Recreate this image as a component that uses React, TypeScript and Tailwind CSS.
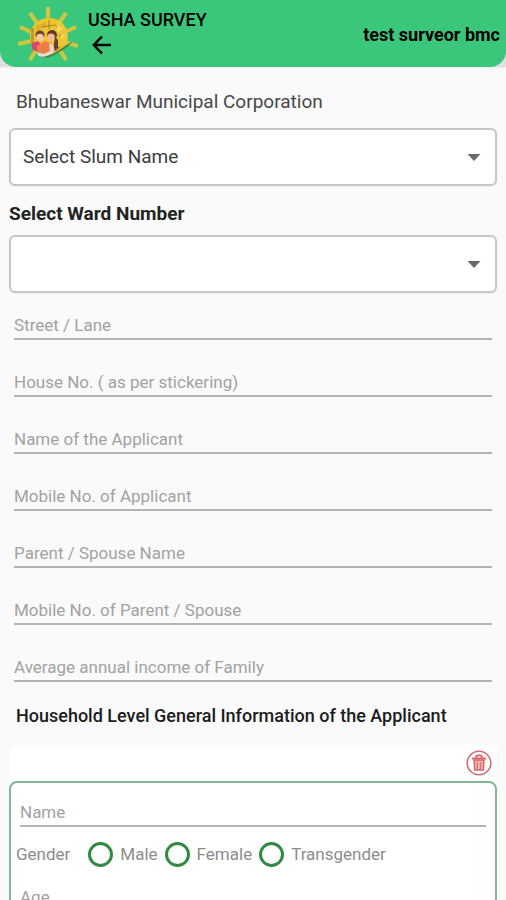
import React from "react";

const applicantFields = [
  { id: "street", label: "Street / Lane" },
  { id: "house", label: "House No. ( as per stickering)" },
  { id: "applicant", label: "Name of the Applicant" },
  { id: "applicant-mobile", label: "Mobile No. of Applicant" },
  { id: "parent", label: "Parent / Spouse Name" },
  { id: "parent-mobile", label: "Mobile No. of Parent / Spouse" },
  { id: "income", label: "Average annual income of Family" },
];

const genders = ["Male", "Female", "Transgender"];

function SunLogo() {
  return (
    <svg viewBox="0 0 62 54" className="h-[54px] w-[62px] shrink-0" aria-hidden="true">
      <g stroke="#cfc540" strokeWidth="4">
        <path d="M32 0v11M14 6l7 10M50 6l-7 10M4 20l13 6M60 20l-13 6M2 37l14-3M62 39l-14-4M14 53l6-10M50 53l-6-10" />
      </g>
      <ellipse cx="33" cy="29" rx="19" ry="18" fill="#edc432" />
      <path d="M15 21h3v17h-3z" fill="#c09a30" />
      <path d="M20 19l10-4v5l-10 4z" fill="#e0ae2c" />
      <path d="M33 13v9M26 20l13-2M39 18l4 4M43 29l5-2" stroke="#a37f28" strokeWidth="1" fill="none" />
      <path d="M41 18l6 4-6 3zM46 26l4 3-6 3z" fill="#f2dc5c" />
      <ellipse cx="24" cy="28" rx="4.5" ry="4.5" fill="#6a4228" />
      <ellipse cx="24" cy="30.500" rx="3.800" ry="3.800" fill="#f4c9a6" />
      <ellipse cx="36" cy="28" rx="5" ry="5" fill="#5c3928" />
      <ellipse cx="35" cy="30.500" rx="4" ry="4" fill="#eeb98f" />
      <path d="M39 30l3 3 0 8-5 2z" fill="#62402f" />
      <path d="M16 36l6-2 4 5-3 7-7-4z" fill="#dc4472" />
      <path d="M21 39l8-5 6 2 3 6-7 5-10-2z" fill="#f07d48" />
      <path d="M33 36l4 2 2 6-5 1z" fill="#f1d9c4" />
      <path d="M20 45l8 2 6-3 5 2-8 5-8-2z" fill="#e8ded0" />
      <path d="M24 50c10 0 19-7 33-16-5 7-13 10-18 14l-8 3z" fill="#41893d" />
      <path d="M37 43l8-4-5 5z" fill="#b74335" />
    </svg>
  );
}

function Dropdown({ id, label, options }: { id: string; label: string; options: string[] }) {
  return (
    <div className="relative">
      <select
        id={id}
        aria-label={label}
        className="block h-[58px] w-full appearance-none rounded-md border-2 border-[#c6c6c6] bg-white pr-10 pl-3 text-[19px] text-[#3c3c3c] shadow-xs outline-none"
      >
        {options.map((option) => (
          <option key={option}>{option}</option>
        ))}
      </select>
      <svg
        viewBox="0 0 14 8"
        className="pointer-events-none absolute top-1/2 right-4 h-[8px] w-[14px] -translate-y-1/2"
        aria-hidden="true"
      >
        <path d="M0.500 1h13L7 8z" fill="#6a6a6a" />
      </svg>
    </div>
  );
}

function LineField({ id, label }: { id: string; label: string }) {
  return (
    <input
      id={id}
      type="text"
      aria-label={label}
      placeholder={label}
      className="block h-7 w-full border-b-2 border-[#b4b4b4] bg-transparent text-[17px] text-[#333333] outline-none placeholder:text-[#a2a2a2]"
    />
  );
}

function TrashIcon() {
  return (
    <svg viewBox="0 0 26 26" className="size-[26px]" fill="none" stroke="#d9676b" aria-hidden="true">
      <circle cx="13" cy="13" r="11.8" strokeWidth="1.5" />
      <path d="M6 8.500h14M10 7.500c0-3 6-3 6 0" strokeWidth="1.8" />
      <path d="M8 10h10l-.7 10H8.700z" fill="#f0b0b1" strokeWidth="1.5" />
      <path d="M11.300 12v7M14.700 12v7" strokeWidth="1" />
    </svg>
  );
}

export default function App() {
  return (
    <div className="flex h-screen flex-col bg-[#fafafa] font-['Roboto',sans-serif]">
      <div className="shrink-0 bg-[#dfdfe1] shadow-xs">
        <header className="flex h-[67px] items-center rounded-b-2xl bg-[#3ac77c] pr-[6px] pl-4 text-black">
          <SunLogo />
          <div className="ml-[10px] flex flex-col items-start gap-[5px] pb-[2px]">
            <h1 className="text-[18px] leading-5 font-medium">USHA SURVEY</h1>
            <button type="button" aria-label="Back" className="ml-1">
              <svg viewBox="0 0 20 20" className="size-5" fill="none" stroke="black" strokeWidth="2.5" aria-hidden="true">
                <path d="M19 10H2M10 1.500L1.800 10l8.200 8.500" />
              </svg>
            </button>
          </div>
          <p className="ml-auto pt-[2px] text-[18px] leading-5 font-bold">test surveor bmc</p>
        </header>
      </div>

      <main className="min-h-0 flex-1 overflow-y-auto px-[9px] [scrollbar-width:none]">
        <p className="mt-[23px] ml-[7px] text-[19px] leading-6 text-[#484848]">Bhubaneswar Municipal Corporation</p>
        <div className="mt-[14px]">
          <Dropdown id="slum" label="Slum name" options={["Select Slum Name"]} />
        </div>
        <label htmlFor="ward" className="mt-4 mb-[9px] block text-[19px] leading-6 font-bold text-[#222222]">
          Select Ward Number
        </label>
        <Dropdown id="ward" label="Select Ward Number" options={[""]} />

        <div className="mt-[19px] flex flex-col gap-[29px] px-[5px]">
          {applicantFields.map((field) => (
            <LineField key={field.id} id={field.id} label={field.label} />
          ))}
        </div>

        <h2 className="mt-[22px] ml-[7px] text-[18px] leading-6 font-medium text-[#1c1c1c]">
          Household Level General Information of the Applicant
        </h2>

        <section className="mt-[17px] rounded-t-md bg-white">
          <div className="flex h-9 items-center justify-end pr-[5px]">
            <button type="button" aria-label="Remove member">
              <TrashIcon />
            </button>
          </div>
          <div className="rounded-lg border-2 border-[#84b594] pt-4 pb-4">
            <div className="px-[9px]">
              <LineField id="member-name" label="Name" />
            </div>
            <div
              role="radiogroup"
              aria-labelledby="gender-label"
              className="mt-[14px] flex h-[26px] items-center gap-[7px] pl-[5px] text-[17px] leading-6 text-[#8c8c8c]"
            >
              <span id="gender-label" className="mr-[11px]">Gender</span>
              {genders.map((gender) => (
                <label key={gender} className="flex items-center gap-[7px]">
                  <input
                    type="radio"
                    name="gender"
                    value={gender}
                    className="size-[25px] appearance-none rounded-full border-[3px] border-[#328a42] bg-white checked:bg-[#328a42]"
                  />
                  {gender}
                </label>
              ))}
            </div>
            <div className="mt-[17px] px-[9px]">
              <LineField id="age" label="Age" />
            </div>
          </div>
        </section>
      </main>
    </div>
  );
}
